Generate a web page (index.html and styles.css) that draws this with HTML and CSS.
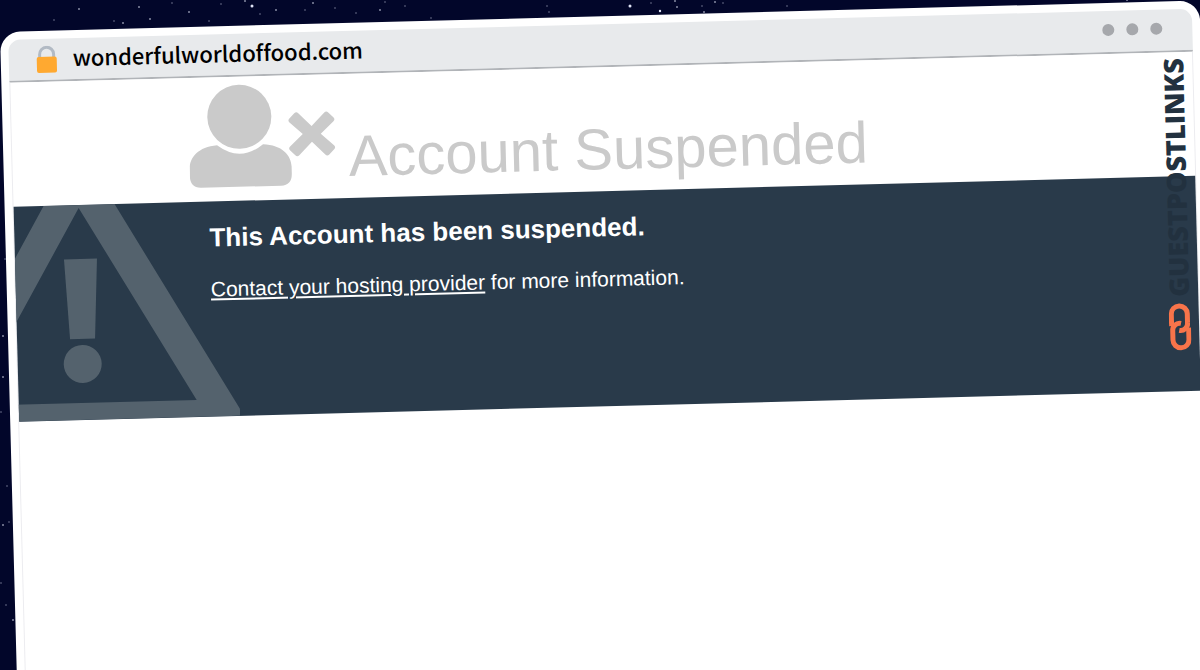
FILE: index.html
```html
<!DOCTYPE html>
<html lang="en">
<head>
	<meta charset="UTF-8">
	<title>Account Suspended</title>
	<link rel="stylesheet" href="styles.css">
</head>
<body>

	<svg class="stars" width="1200" height="670" aria-hidden="true">
		<g opacity=".3">
			<circle cx="54" cy="20" r="1"/><circle cx="114" cy="21" r="1"/><circle cx="172" cy="3" r="1"/><circle cx="209" cy="21" r="1"/><circle cx="221" cy="4" r="1"/>
			<circle cx="260" cy="14" r="1"/><circle cx="305" cy="10" r="1"/><circle cx="335" cy="8" r="1"/><circle cx="356" cy="13" r="1"/><circle cx="385" cy="2" r="1"/>
			<circle cx="405" cy="6" r="1"/><circle cx="431" cy="18" r="1"/><circle cx="547" cy="6" r="1"/><circle cx="549" cy="12" r="1"/><circle cx="651" cy="3" r="1"/>
			<circle cx="702" cy="6" r="1"/><circle cx="723" cy="3" r="1"/><circle cx="787" cy="6" r="1"/><circle cx="1" cy="412" r="1"/><circle cx="7" cy="486" r="1"/>
			<circle cx="9" cy="522" r="1"/><circle cx="1" cy="583" r="1"/><circle cx="6" cy="605" r="1"/><circle cx="5" cy="259" r="1"/>
		</g>
		<g opacity=".6">
			<circle cx="79" cy="9" r="1"/><circle cx="123" cy="23" r="1"/><circle cx="139" cy="7" r="1"/><circle cx="150" cy="19" r="1"/><circle cx="189" cy="12" r="1"/>
			<circle cx="245" cy="1" r="1"/><circle cx="276" cy="10" r="1"/><circle cx="313" cy="3" r="1"/><circle cx="380" cy="10" r="1"/>
			<circle cx="675" cy="1" r="1"/><circle cx="677" cy="7" r="1"/><circle cx="704" cy="12" r="1"/><circle cx="715" cy="2" r="1"/><circle cx="1127" cy="0" r="1"/>
			<circle cx="3" cy="336" r="1"/><circle cx="3" cy="377" r="1"/><circle cx="3" cy="525" r="1"/><circle cx="13" cy="620" r="1"/>
		</g>
		<circle cx="252" cy="6" r="1.5"/><circle cx="630" cy="6" r="1.5"/><circle cx="660" cy="11" r="1.2"/>
	</svg>

	<div class="window">
		<div class="bar">
			<svg class="lock" width="22" height="28" viewBox="0 0 22 28" aria-hidden="true">
				<path d="M4 13V8.500a7 7 0 0 1 14 0V13" fill="none" stroke="#b2bac4" stroke-width="3"/>
				<rect x="1" y="11" width="20" height="16" rx="2" fill="#ffa930"/>
			</svg>
			<span class="host">wonderfulworldoffood.com</span>
			<span class="dots"><i></i><i></i><i></i></span>
		</div>

		<div class="page">
			<header class="head">
				<svg class="user" width="147" height="104" viewBox="0 0 147 104" aria-hidden="true">
					<circle cx="51" cy="33" r="32"/>
					<path d="M28 61Q51 79 74 61C93 62 102 73 102 84V91Q102 103 91 103H11Q0 103 0 91V84C0 73 9 62 28 61Z"/>
					<path d="M123 44L136 31Q138 29 140 31L145 36Q147 38 145 40L132 52L145 64Q147 66 145 68L140 73Q138 75 136 73L123 60L110 73Q108 75 106 73L101 68Q99 66 101 64L114 52L101 40Q99 38 101 36L106 31Q108 29 110 31Z"/>
				</svg>
				<h1>Account Suspended</h1>
			</header>

			<section class="info">
				<svg class="warning" width="221" height="215" viewBox="0 0 221 215" aria-hidden="true">
					<path fill-rule="evenodd" d="M30 0H101L221 208V215H-90V208ZM65 3L-48 198H178Z"/>
					<path d="M49 54H82L78 134H53Z"/>
					<circle cx="65" cy="159" r="19"/>
				</svg>
				<h2>This Account has been suspended.</h2>
				<p><a href="#">Contact your hosting provider</a> for more information.</p>
			</section>

			<div class="brand">
				<svg width="22" height="48" viewBox="0 0 22 48" aria-hidden="true">
					<path d="M2.500 23V11A8 8 0 0 1 18.500 11V20A7 7 0 0 1 10 27.500"/>
					<path d="M19.500 25V37A8 8 0 0 1 3.500 37V28A7 7 0 0 1 12 20.500"/>
				</svg>
				<span>GUESTPOSTLINKS</span>
			</div>
		</div>
	</div><!-- .window -->

</body>
</html>
```

FILE: styles.css
```css
*{ box-sizing: border-box;}
body{ margin: 0; height: 100vh; overflow: hidden; background: #02062a; font-family: "Liberation Sans", Arial, sans-serif;}
.stars{ position: absolute; top: 0; left: 0; fill: #dfe3f5;}

/* browser frame */
.window{ position: relative; margin-top: 32px; height: 100vh; padding: 8px 8px 0; background: #fff; border-radius: 20px 20px 0 0; transform: rotate(-1.5deg); transform-origin: 0 0;}
.bar{ display: flex; align-items: center; height: 43px; padding: 0 30px 0 27px; background: #e8eaec; border-bottom: 2px solid #b1b4b8; border-radius: 12px 12px 0 0;}
.lock{ flex: none;}
.host{ margin-left: 15px; padding-bottom: 6px; font: 500 22px/32px "Noto Sans CJK SC", sans-serif; font-variant-ligatures: none; color: #000;}
.dots{ display: flex; gap: 12px; margin-left: auto; padding-bottom: 3px;}
.dots i{ width: 12px; height: 12px; border-radius: 50%; background: #a6a8ac;}

/* page */
.page{ position: relative; height: calc(100% - 43px); border: solid #ececf0; border-width: 0 1px;}
.head{ display: flex; align-items: flex-end; height: 124px; padding: 0 0 13px 15%;}
.user{ flex: none; fill: #cacaca;}
h1{ margin: 0 0 0 12px; font-size: 58px; line-height: 58px; font-weight: normal; color: #cacaca;}
.info{ position: relative; height: 215px; padding: 20px 20px 0 195px; color: #fff; background: #293a4a;}
.warning{ position: absolute; left: 0; top: 0; fill: #54626d;}
h2{ margin: 0 0 20px; font-size: 26px; line-height: 32px;}
p{ margin: 0; font-size: 21px; line-height: 32px;}
a{ color: #fff;}

/* watermark, reads bottom to top */
.brand{ position: absolute; top: 6px; right: 7px; display: flex; align-items: center; gap: 6px; writing-mode: vertical-rl; transform: rotate(180deg);}
.brand svg{ width: 22px; height: 48px; fill: none; stroke: #f8744a; stroke-width: 5;}
.brand span{ font: 800 27px/24px "Open Sans", sans-serif; color: #22313f;}
```
